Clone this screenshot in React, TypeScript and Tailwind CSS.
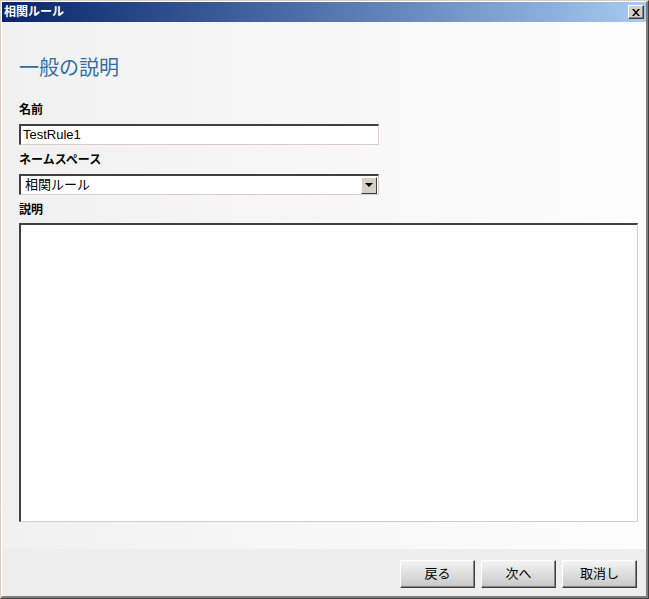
import React from 'react';

const font = { fontFamily: '"Liberation Sans", "Noto Sans CJK JP", sans-serif' };

const Button = ({ children }: { children: React.ReactNode }) => (
  <button
    className="w-[75px] h-[28px] text-[13px] text-black bg-gradient-to-b from-[#f4f4f4] to-[#c8c8c8] border border-t-[#ffffff] border-l-[#ffffff] border-r-[#404040] border-b-[#404040] shadow-[inset_-1px_-1px_0_#808080]"
    style={font}
  >
    {children}
  </button>
);

const App = () => {
  return (
    <div
      className="w-[649px] h-[599px] flex flex-col bg-[#d4d0c8] border-t border-l border-[#d4d0c8] border-r border-b border-r-[#404040] border-b-[#404040]"
      style={font}
    >
      <div className="flex-1 flex flex-col border-l border-t border-white border-r-2 border-b-2 border-r-[#808080] border-b-[#808080]">
        {/* title bar */}
        <div className="h-[20px] flex items-center justify-between pl-[2px] pr-[2px] bg-gradient-to-r from-[#0a246a] to-[#a6caf0]">
          <span className="text-white text-[12px] font-bold leading-none">相関ルール</span>
          <div className="w-[16px] h-[14px] flex items-center justify-center bg-[#d4d0c8] border border-t-white border-l-white border-r-[#404040] border-b-[#404040] shadow-[inset_-1px_-1px_0_#808080]">
            <svg width="8" height="7" viewBox="0 0 8 7">
              <path d="M0 0h2l2 2.5L6 0h2L5 3.5 8 7H6L4 4.5 2 7H0l3-3.5z" fill="#000" />
            </svg>
          </div>
        </div>

        {/* body */}
        <div className="flex-1 flex flex-col bg-gradient-to-r from-[#f1f1f1] to-[#fdfdfd] pl-[17px] pr-[8px]">
          <h1 className="mt-[34px] text-[20px] leading-[24px] text-[#2f6ea5] font-normal">一般の説明</h1>

          <label className="mt-[23px] text-[12px] font-bold leading-[14px] text-black">名前</label>
          <div className="mt-[7px] w-[360px] h-[21px] bg-white border-t-2 border-l-2 border-t-[#404040] border-l-[#404040] border-r border-b border-r-[#d4d0c8] border-b-[#d4d0c8] flex items-center px-[2px] text-[13px] text-black">
            TestRule1
          </div>

          <label className="mt-[8px] text-[12px] font-bold leading-[14px] text-black">ネームスペース</label>
          <div className="mt-[7px] w-[360px] h-[21px] bg-white border-t-2 border-l-2 border-t-[#404040] border-l-[#404040] border-r border-b border-r-[#d4d0c8] border-b-[#d4d0c8] flex items-center justify-between pl-[4px] text-[13px] text-black">
            <span>相関ルール</span>
            <div className="w-[16px] h-[17px] mr-[1px] bg-[#d4d0c8] border border-t-white border-l-white border-r-[#404040] border-b-[#404040] flex items-center justify-center">
              <svg width="8" height="4" viewBox="0 0 8 4">
                <path d="M0 0h8L4 4z" fill="#000" />
              </svg>
            </div>
          </div>

          <label className="mt-[8px] text-[12px] font-bold leading-[14px] text-black">説明</label>
          <div className="mt-[6px] h-[299px] bg-white border-t-2 border-l-2 border-t-[#404040] border-l-[#404040] border-r border-b border-r-[#d4d0c8] border-b-[#d4d0c8]"></div>
        </div>

        {/* footer */}
        <div className="h-[47px] bg-[#eeeeee] flex items-start justify-end gap-[6px] pt-[11px] pr-[9px]">
          <Button>戻る</Button>
          <Button>次へ</Button>
          <Button>取消し</Button>
        </div>
      </div>
    </div>
  );
};

export default App;
